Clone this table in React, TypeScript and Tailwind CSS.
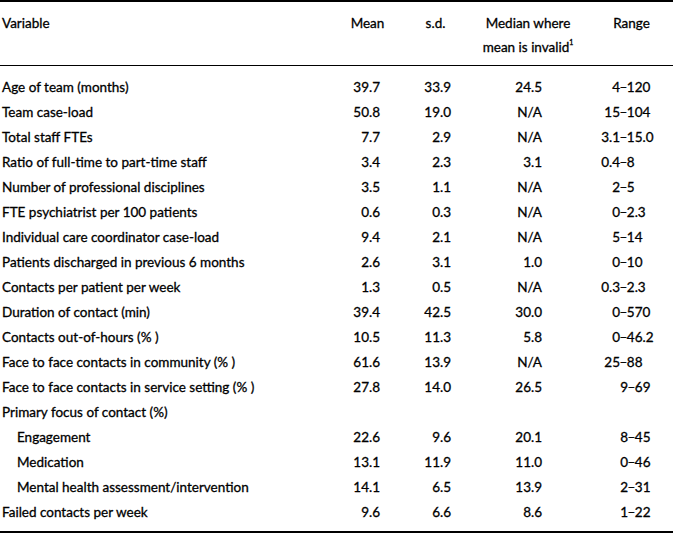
type Row = {
  label: string;
  indent?: boolean;
  mean?: string;
  sd?: string;
  median?: string;
  range?: [string, string];
  shift?: boolean;
};

const rows: Row[] = [
  { label: "Age of team (months)", mean: "39.7", sd: "33.9", median: "24.5", range: ["4", "120"] },
  { label: "Team case-load", mean: "50.8", sd: "19.0", median: "N/A", range: ["15", "104"] },
  { label: "Total staff FTEs", mean: "7.7", sd: "2.9", median: "N/A", range: ["3.1", "15.0"] },
  { label: "Ratio of full-time to part-time staff", mean: "3.4", sd: "2.3", median: "3.1", range: ["0.4", "8"] },
  { label: "Number of professional disciplines", mean: "3.5", sd: "1.1", median: "N/A", range: ["2", "5"] },
  { label: "FTE psychiatrist per 100 patients", mean: "0.6", sd: "0.3", median: "N/A", range: ["0", "2.3"] },
  { label: "Individual care coordinator case-load", mean: "9.4", sd: "2.1", median: "N/A", range: ["5", "14"] },
  { label: "Patients discharged in previous 6 months", mean: "2.6", sd: "3.1", median: "1.0", range: ["0", "10"] },
  { label: "Contacts per patient per week", mean: "1.3", sd: "0.5", median: "N/A", range: ["0.3", "2.3"] },
  { label: "Duration of contact (min)", mean: "39.4", sd: "42.5", median: "30.0", range: ["0", "570"] },
  { label: "Contacts out-of-hours (% )", mean: "10.5", sd: "11.3", median: "5.8", range: ["0", "46.2"] },
  { label: "Face to face contacts in community (% )", mean: "61.6", sd: "13.9", median: "N/A", range: ["25", "88"] },
  { label: "Face to face contacts in service setting (% )", mean: "27.8", sd: "14.0", median: "26.5", range: ["9", "69"], shift: true },
  { label: "Primary focus of contact (%)" },
  { label: "Engagement", indent: true, mean: "22.6", sd: "9.6", median: "20.1", range: ["8", "45"], shift: true },
  { label: "Medication", indent: true, mean: "13.1", sd: "11.9", median: "11.0", range: ["0", "46"], shift: true },
  { label: "Mental health assessment/intervention", indent: true, mean: "14.1", sd: "6.5", median: "13.9", range: ["2", "31"], shift: true },
  { label: "Failed contacts per week", mean: "9.6", sd: "6.6", median: "8.6", range: ["1", "22"], shift: true },
];

const cols = "grid grid-cols-[340px_55px_81px_104px_93px]";

function RangeCell({ range, shift }: { range?: [string, string]; shift?: boolean }) {
  if (!range) return <div />;
  return (
    <div className={shift ? "flex pl-[8px]" : "flex"}>
      <span className="w-[40px] text-right">{range[0]}</span>
      <span className="mx-[-0.5px]">–</span>
      <span>{range[1]}</span>
    </div>
  );
}

export default function App() {
  return (
    <main className="w-[673px] h-[533px] bg-white text-black font-['Lato','Liberation_Sans',sans-serif] text-[13.5px] [-webkit-text-stroke:0.3px_#000]">
      <div className="border-t-2 border-b-2 border-black">
        <div className={`${cols} border-b border-black pt-[9px] pb-[6px] leading-[24px]`}>
          <div className="pl-[2px]">Variable</div>
          <div className="text-center">Mean</div>
          <div className="text-center">s.d.</div>
          <div className="text-center">
            Median where
            <br />
            mean is invalid<sup className="text-[7px] align-top leading-none relative top-[4px]">1</sup>
          </div>
          <div className="pl-[10px] text-center">Range</div>
        </div>

        <div className="pt-[9px] pb-[6px]">
          {rows.map((row) => (
            <div key={row.label} className={`${cols} h-[25px] leading-[25px]`}>
              <div className={row.indent ? "pl-[17px]" : "pl-[2px]"}>{row.label}</div>
              <div className="text-right pr-[15px]">{row.mean}</div>
              <div className="text-right pr-[25px]">{row.sd}</div>
              <div className="text-right pr-[38px]">{row.median}</div>
              <RangeCell range={row.range} shift={row.shift} />
            </div>
          ))}
        </div>
      </div>
    </main>
  );
}
